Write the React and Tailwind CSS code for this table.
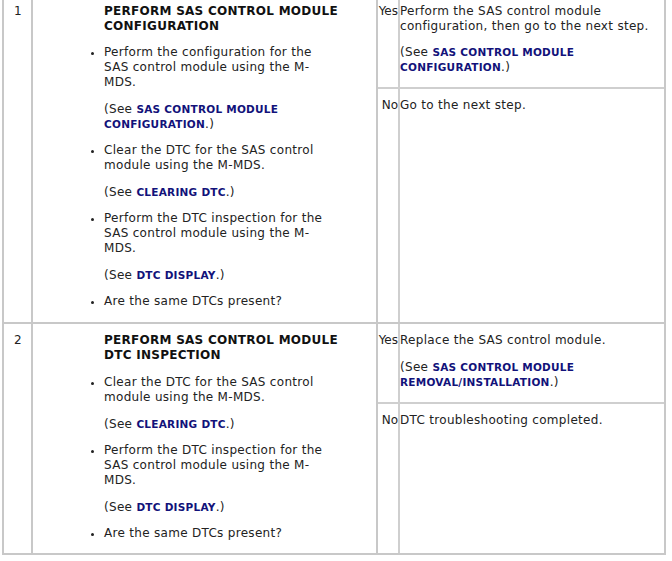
import React from 'react'

const Link = ({ children }) => (
  <span className="font-bold text-[10.5px] tracking-[0.25px] text-[#12127a]">{children}</span>
)

const Bullet = ({ children, className = '' }) => (
  <div className={`flex ${className}`}>
    <span className="w-[15px] shrink-0">
      <span className="block ml-[2px] mt-[7px] w-[3px] h-[3px] rounded-full bg-[#222]" />
    </span>
    <div>{children}</div>
  </div>
)

const See = ({ children, className = '' }) => (
  <p className={`pl-[15px] ${className}`}>(See {children}.)</p>
)

function Answer({ label, children, grow, top }) {
  return (
    <div className={`flex ${grow ? 'flex-1' : 'border-b-2 border-[#cfcfcf]'}`}>
      <div className={`w-[22px] shrink-0 text-right tracking-normal border-r-2 border-[#cfcfcf] ${top} pb-[12px]`}>
        {label}
      </div>
      <div className={`flex-1 ${top} pb-[12px]`}>{children}</div>
    </div>
  )
}

export default function App() {
  return (
    <div
      className="bg-white w-[672px] h-[561px] text-[12px] leading-[15px] tracking-[0.3px] text-[#222]"
      style={{ fontFamily: '"DejaVu Sans", Verdana, sans-serif' }}
    >
      <div className="ml-[2px] w-[664px] border-x-2 border-b-2 border-[#c8c8c8]">
        {/* step 1 */}
        <div className="flex h-[324px] border-b-2 border-[#c8c8c8]">
          <div className="w-[29px] shrink-0 border-r-2 border-[#c8c8c8] pl-[10px] pt-[4px]">1</div>
          <div className="w-[345px] shrink-0 border-r-2 border-[#c8c8c8] pl-[56px] pt-[4px]">
            <p className="pl-[15px] font-bold tracking-[0.27px] text-[#111]">
              PERFORM SAS CONTROL MODULE<br />CONFIGURATION
            </p>
            <Bullet className="mt-[11px]">
              Perform the configuration for the<br />SAS control module using the M-<br />MDS.
            </Bullet>
            <See className="mt-[12px]">
              <Link>SAS CONTROL MODULE<br />CONFIGURATION</Link>
            </See>
            <Bullet className="mt-[11px]">
              Clear the DTC for the SAS control<br />module using the M-MDS.
            </Bullet>
            <See className="mt-[12px]">
              <Link>CLEARING DTC</Link>
            </See>
            <Bullet className="mt-[11px]">
              Perform the DTC inspection for the<br />SAS control module using the M-<br />MDS.
            </Bullet>
            <See className="mt-[12px]">
              <Link>DTC DISPLAY</Link>
            </See>
            <Bullet className="mt-[11px]">Are the same DTCs present?</Bullet>
          </div>
          <div className="flex-1 flex flex-col">
            <Answer label="Yes" top="pt-[4px]">
              <p>Perform the SAS control module<br />configuration, then go to the next step.</p>
              <p className="mt-[11px]">
                (See <Link>SAS CONTROL MODULE<br />CONFIGURATION</Link>.)
              </p>
            </Answer>
            <Answer label="No" grow top="pt-[9px]">
              <p>Go to the next step.</p>
            </Answer>
          </div>
        </div>

        {/* step 2 */}
        <div className="flex h-[229px]">
          <div className="w-[29px] shrink-0 border-r-2 border-[#c8c8c8] pl-[10px] pt-[9px]">2</div>
          <div className="w-[345px] shrink-0 border-r-2 border-[#c8c8c8] pl-[56px] pt-[9px]">
            <p className="pl-[15px] font-bold tracking-[0.27px] text-[#111]">
              PERFORM SAS CONTROL MODULE<br />DTC INSPECTION
            </p>
            <Bullet className="mt-[12px]">
              Clear the DTC for the SAS control<br />module using the M-MDS.
            </Bullet>
            <See className="mt-[12px]">
              <Link>CLEARING DTC</Link>
            </See>
            <Bullet className="mt-[11px]">
              Perform the DTC inspection for the<br />SAS control module using the M-<br />MDS.
            </Bullet>
            <See className="mt-[12px]">
              <Link>DTC DISPLAY</Link>
            </See>
            <Bullet className="mt-[11px]">Are the same DTCs present?</Bullet>
          </div>
          <div className="flex-1 flex flex-col">
            <Answer label="Yes" top="pt-[9px]">
              <p>Replace the SAS control module.</p>
              <p className="mt-[12px]">
                (See <Link>SAS CONTROL MODULE<br />REMOVAL/INSTALLATION</Link>.)
              </p>
            </Answer>
            <Answer label="No" grow top="pt-[9px]">
              <p>DTC troubleshooting completed.</p>
            </Answer>
          </div>
        </div>
      </div>
    </div>
  )
}
